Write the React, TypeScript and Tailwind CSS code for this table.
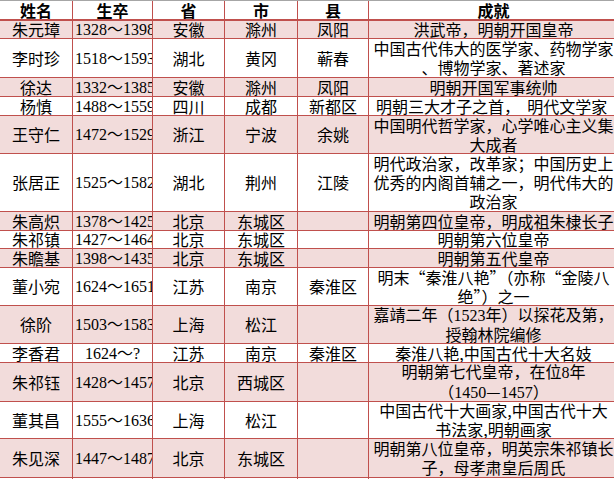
import type { ReactNode } from 'react';

type Row = {
  name: string;
  years: string;
  province: string;
  city: string;
  county: string;
  deeds: ReactNode[];
  h: string;
  left?: boolean;
};

const Num = ({ children }: { children: ReactNode }) => (
  <span className="font-['Liberation_Serif','Noto_Sans_CJK_SC',serif]">{children}</span>
);

const rows: Row[] = [
  { name: '朱元璋', years: '1328～1398', province: '安徽', city: '滁州', county: '凤阳', deeds: ['洪武帝，明朝开国皇帝'], h: 'h-[18px]' },
  { name: '李时珍', years: '1518～1593', province: '湖北', city: '黄冈', county: '蕲春', deeds: ['中国古代伟大的医学家、药物学家', '、博物学家、著述家'], h: 'h-[39px]' },
  { name: '徐达', years: '1332～1385', province: '安徽', city: '滁州', county: '凤阳', deeds: ['明朝开国军事统帅'], h: 'h-[19px]' },
  { name: '杨慎', years: '1488～1559', province: '四川', city: '成都', county: '新都区', deeds: ['明朝三大才子之首，\u00a0\u00a0明代文学家'], h: 'h-[19px]', left: true },
  { name: '王守仁', years: '1472～1529', province: '浙江', city: '宁波', county: '余姚', deeds: ['中国明代哲学家，心学唯心主义集', '大成者'], h: 'h-[38px]' },
  { name: '张居正', years: '1525～1582', province: '湖北', city: '荆州', county: '江陵', deeds: ['明代政治家，改革家；中国历史上', '优秀的内阁首辅之一，明代伟大的', '政治家'], h: 'h-[58px]' },
  { name: '朱高炽', years: '1378～1425', province: '北京', city: '东城区', county: '', deeds: ['明朝第四位皇帝，明成祖朱棣长子'], h: 'h-[19px]' },
  { name: '朱祁镇', years: '1427～1464', province: '北京', city: '东城区', county: '', deeds: ['明朝第六位皇帝'], h: 'h-[18px]' },
  { name: '朱瞻基', years: '1398～1435', province: '北京', city: '东城区', county: '', deeds: ['明朝第五代皇帝'], h: 'h-[19px]' },
  { name: '董小宛', years: '1624～1651', province: '江苏', city: '南京', county: '秦淮区', deeds: ['明末“秦淮八艳”（亦称“金陵八', '绝”）之一'], h: 'h-[38px]' },
  { name: '徐阶', years: '1503～1583', province: '上海', city: '松江', county: '', deeds: [<>嘉靖二年（<Num>1523</Num>年）以探花及第，</>, '授翰林院编修'], h: 'h-[38px]' },
  { name: '李香君', years: '1624～?', province: '江苏', city: '南京', county: '秦淮区', deeds: ['秦淮八艳,中国古代十大名妓'], h: 'h-[19px]' },
  { name: '朱祁钰', years: '1428～1457', province: '北京', city: '西城区', county: '', deeds: [<>明朝第七代皇帝，在位<Num>8</Num>年</>, <>（<Num>1450</Num>—<Num>1457</Num>）</>], h: 'h-[39px]' },
  { name: '董其昌', years: '1555～1636', province: '上海', city: '松江', county: '', deeds: ['中国古代十大画家,中国古代十大', '书法家,明朝画家'], h: 'h-[37px]' },
  { name: '朱见深', years: '1447～1487', province: '北京', city: '东城区', county: '', deeds: ['明朝第八位皇帝，明英宗朱祁镇长', '子，母孝肃皇后周氏'], h: 'h-[39px]' },
];

const cols = 'grid grid-cols-[73px_80px_72px_73px_71px_250px]';
const cell = 'flex items-center justify-center overflow-hidden border-r border-[#c0504d] whitespace-nowrap';

export default function App() {
  return (
    <div className="h-[479px] w-[614px] overflow-hidden bg-white font-['Noto_Sans_CJK_SC',sans-serif] text-[16px] leading-[19px] text-black">
      <div className={`${cols} h-[21px] border-t border-b-2 border-t-[#a6a6a6] border-b-[#c0504d] font-bold`}>
        {['姓名', '生卒', '省', '市', '县', '成就'].map((t) => (
          <div key={t} className={cell}>
            {t}
          </div>
        ))}
      </div>

      {rows.map((r, i) => (
        <div
          key={r.name}
          className={`${cols} ${r.h} border-b border-[#c0504d] ${i % 2 === 0 ? 'bg-[#f2dcdb]' : 'bg-white'}`}
        >
          <div className={cell}>{r.name}</div>
          <div className={`${cell} ${r.years.length > 7 ? 'justify-start pl-[2px]' : ''}`}>
            <Num>{r.years}</Num>
          </div>
          <div className={cell}>{r.province}</div>
          <div className={cell}>{r.city}</div>
          <div className={cell}>{r.county}</div>
          <div className={`${cell} flex-col ${r.left ? 'items-start pl-[7px]' : ''}`}>
            {r.deeds.map((d, j) => (
              <div key={j}>{d}</div>
            ))}
          </div>
        </div>
      ))}

      <div className={`${cols} h-[19px]`}>
        {[0, 1, 2, 3, 4, 5].map((k) => (
          <div key={k} className={cell} />
        ))}
      </div>
    </div>
  );
}
